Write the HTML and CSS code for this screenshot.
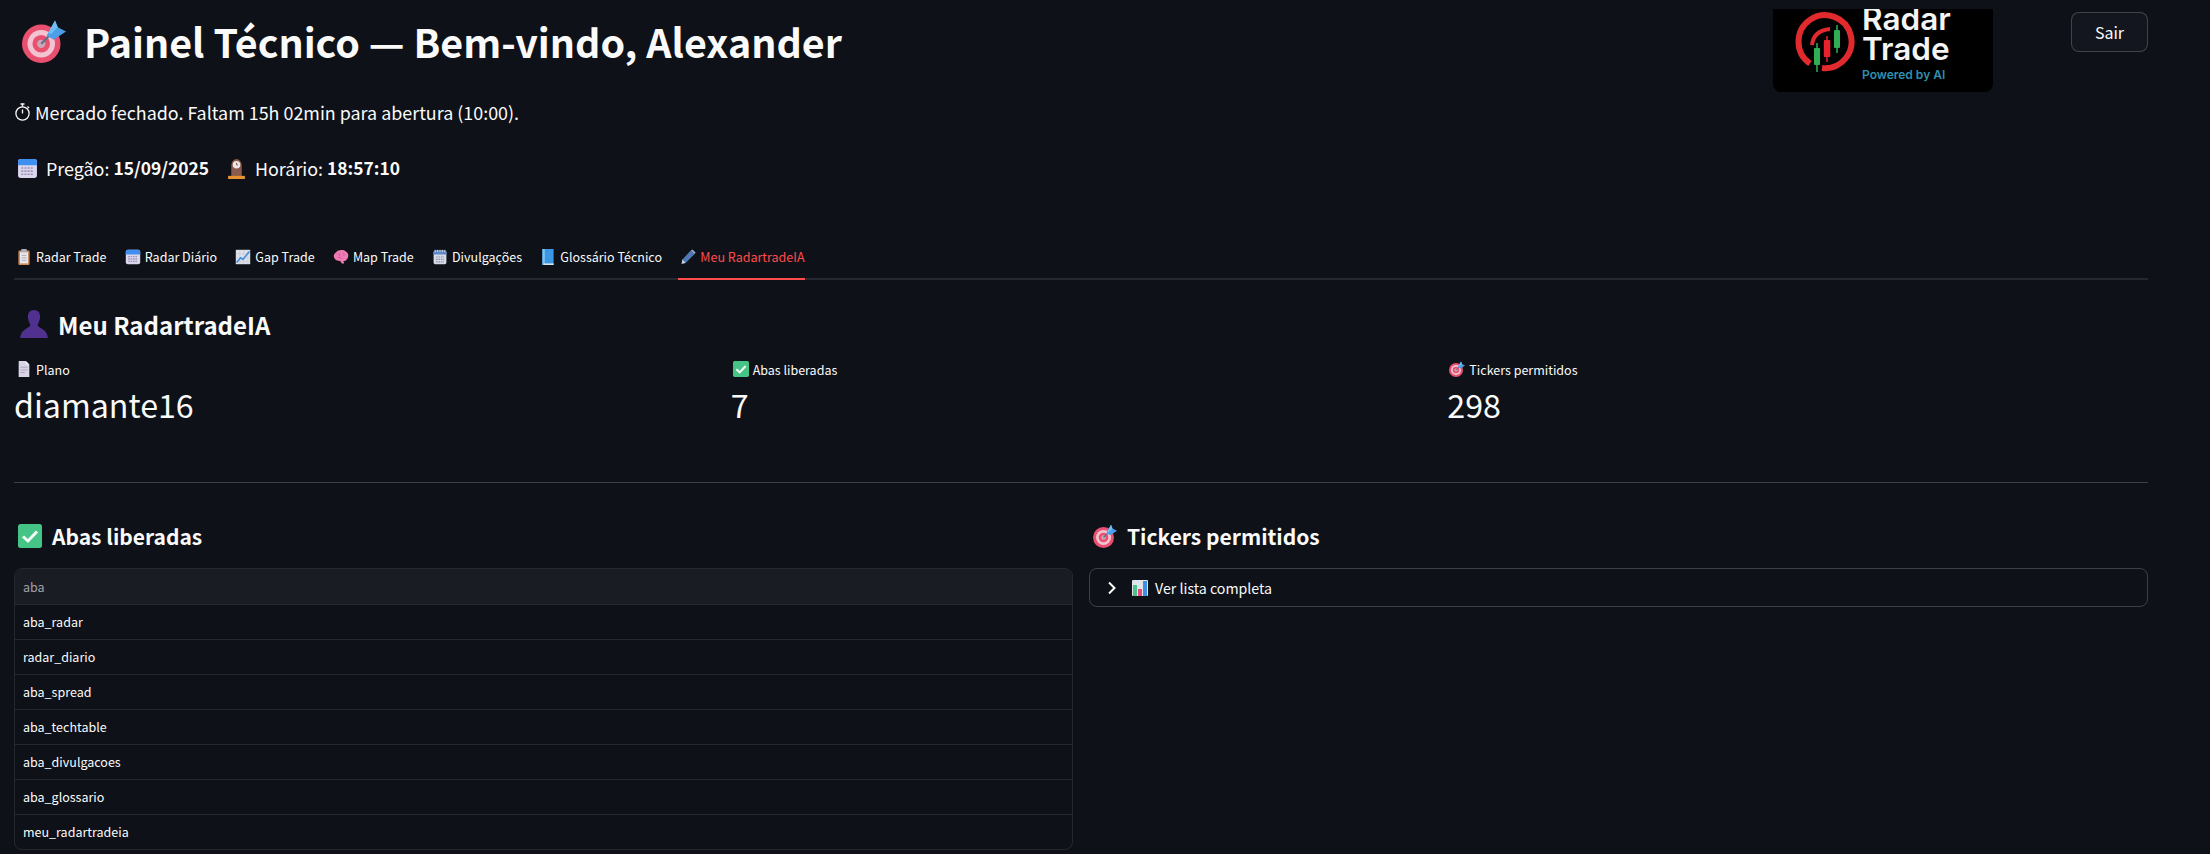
FILE: index.html

```html
<!DOCTYPE html>
<html lang="pt-BR">
<head>
    <meta charset="UTF-8">
    <meta name="viewport" content="width=device-width, initial-scale=1.0">
    <link rel="stylesheet" href="styles.css">
    <title>Painel Técnico</title>
</head>
<body>
    <!-- Emoji drawings used all over the page -->
    <svg class="defs" aria-hidden="true">
        <symbol id="i-target" viewBox="0 0 32 32">
            <circle cx="14" cy="18" r="14" fill="#e9506f"/>
            <circle cx="14" cy="18" r="10" fill="#f3c3d2"/>
            <circle cx="14" cy="18" r="6.4" fill="#e9506f"/>
            <circle cx="14" cy="18" r="3" fill="#c9a9b8"/>
            <path d="M14 18 L22 10" stroke="#5f6f85" stroke-width="1.6"/>
            <path d="M18 12 L24 1 L26 6 L32 9 L23 15 Z" fill="#4a9fe8"/>
            <path d="M24 1 L26 6 L21 11 L19 10 Z" fill="#6cc0f5"/>
        </symbol>
        <symbol id="i-timer" viewBox="0 0 16 20">
            <circle cx="8" cy="11.5" r="6.6" fill="none" stroke="#fafafa" stroke-width="1.3"/>
            <path d="M6 2 H10 M8 2 V5 M8 11.5 V7.5 M13 4.5 L14.5 6" stroke="#fafafa" stroke-width="1.3" fill="none"/>
        </symbol>
        <symbol id="i-calendar" viewBox="0 0 20 20">
            <rect x="1" y="1" width="18" height="18" rx="2.5" fill="#dcd6ec"/>
            <path d="M1 7 V3.5 A2.5 2.5 0 0 1 3.5 1 H16.500 A2.500 2.500 0 0 1 19 3.500 V7 Z" fill="#3f8ff0"/>
            <path d="M4 9.500 H16 M4 12.500 H16 M4 15.500 H16" stroke="#9d95bd" stroke-width="1.600" stroke-dasharray="2 1"/>
        </symbol>
        <symbol id="i-spiral" viewBox="0 0 20 20">
            <rect x="2" y="2" width="16" height="17" rx="2" fill="#d6d9e6"/>
            <path d="M2 7 V4 A2 2 0 0 1 4 2 H16 A2 2 0 0 1 18 4 V7 Z" fill="#5b86c9"/>
            <path d="M4 1 V4 M7 1 V4 M10 1 V4 M13 1 V4 M16 1 V4" stroke="#e4e6ef" stroke-width="1"/>
            <path d="M5 10 H15 M5 13 H15 M5 16 H15" stroke="#8f93ad" stroke-width="1.500" stroke-dasharray="2 1"/>
        </symbol>
        <symbol id="i-clock" viewBox="0 0 20 20">
            <path d="M5 18 V7 A5 6 0 0 1 15 7 V18 Z" fill="#8a5a4c"/>
            <circle cx="10" cy="6.500" r="3.600" fill="#ece6e6"/>
            <path d="M10 4.500 V6.500 H11.500" stroke="#6b4a40" stroke-width=".8" fill="none"/>
            <rect x="2" y="17" width="16" height="3" fill="#e8922f"/>
        </symbol>
        <symbol id="i-clipboard" viewBox="0 0 16 20">
            <rect x="1" y="2" width="14" height="18" rx="1.500" fill="#d08a58"/>
            <rect x="3" y="4" width="10" height="14" fill="#e9e6ec"/>
            <rect x="4.500" y="0" width="7" height="4" rx="1" fill="#aab0c0"/>
            <path d="M5 8 H11 M5 11 H11 M5 14 H11" stroke="#9a9fb0" stroke-width="1"/>
        </symbol>
        <symbol id="i-chart" viewBox="0 0 20 20">
            <rect x="1" y="1" width="18" height="18" fill="#dfe1ea"/>
            <path d="M1 6 H19 M1 11 H19 M1 16 H19 M6 1 V19 M11 1 V19 M16 1 V19" stroke="#c2c6d6" stroke-width=".7"/>
            <path d="M2 17 L7 11 L10 13 L18 3" stroke="#3f8fe0" stroke-width="2" fill="none"/>
        </symbol>
        <symbol id="i-brain" viewBox="0 0 20 20">
            <path d="M4 4 C6 1 13 0 16 3 C20 5 20 11 17 13 C16 15 14 15 13 15 L14 18 L11 18 L9 15 C5 15 3 14 2 12 C0 9 1 6 4 4 Z" fill="#ee7bb4"/>
            <path d="M6 6 C8 5 9 7 8 9 M12 5 C14 5 15 7 13 9 M6 11 C8 10 10 11 11 12" stroke="#c94f90" stroke-width=".9" fill="none"/>
        </symbol>
        <symbol id="i-book" viewBox="0 0 16 20">
            <rect x="1" y="0" width="14" height="20" fill="#3b97e3"/>
            <rect x="1" y="0" width="3" height="20" fill="#7fc3f3"/>
            <rect x="3" y="18" width="12" height="2" fill="#d5e4f1"/>
        </symbol>
        <symbol id="i-pen" viewBox="0 0 20 20">
            <path d="M13.500 2 L18 6.500 L7 17.500 L2 18.500 L3 13 Z" fill="#4f79b4"/>
            <path d="M13.500 2 L15.500 0.500 L19.500 4.500 L18 6.500 Z" fill="#8fa9cc"/>
            <path d="M3 13 L7 17.500 L2 18.500 Z" fill="#c8d2e0"/>
        </symbol>
        <symbol id="i-user" viewBox="0 0 28 28">
            <path d="M14 0 C19 0 20.500 4 20 8 C19.700 11 18 14 17.500 15.500 C18 17.500 27 19 28 28 H0 C1 19 10 17.500 10.500 15.500 C10 14 8.300 11 8 8 C7.500 4 9 0 14 0 Z" fill="#51318f"/>
        </symbol>
        <symbol id="i-doc" viewBox="0 0 14 18">
            <path d="M1 0 H9 L13 4 V18 H1 Z" fill="#d9d5e6"/>
            <path d="M9 0 L13 4 H9 Z" fill="#f2f0f8"/>
            <path d="M3 7 H11 M3 10 H11 M3 13 H8" stroke="#a7a3ba" stroke-width="1"/>
        </symbol>
        <symbol id="i-check" viewBox="0 0 24 24">
            <rect width="24" height="24" rx="2.500" fill="#46c486"/>
            <path d="M5 12.500 L10 17 L19 7.500" stroke="#f4fbf7" stroke-width="3" fill="none"/>
        </symbol>
        <symbol id="i-bars" viewBox="0 0 16 16">
            <rect width="16" height="16" rx="1" fill="#dfe3ea"/>
            <rect x="1" y="5" width="4" height="11" fill="#49c38b"/>
            <rect x="6" y="9" width="4" height="7" fill="#e9457f"/>
            <rect x="11" y="1" width="4" height="15" fill="#3f8fe0"/>
        </symbol>
    </svg>

    <div class="page">
        <header class="top">
            <h1 class="title"><svg class="ico-title"><use href="#i-target"/></svg>Painel Técnico — Bem-vindo, Alexander</h1>
            <div class="logo">
                <svg class="logo-mark" viewBox="0 0 64 64">
                    <path d="M15 53.500 A26.500 26.500 0 1 1 27 58" fill="none" stroke="#e02a2e" stroke-width="6"/>
                    <path d="M17 35 C18 26 24 20 35 19" fill="none" stroke="#e02a2e" stroke-width="4"/>
                    <path d="M22 33 V62" stroke="#2fae55" stroke-width="1.500"/>
                    <rect x="19" y="38" width="6" height="17" rx="1" fill="#2fae55"/>
                    <path d="M32 26 V52" stroke="#e8222c" stroke-width="1.500"/>
                    <rect x="28.800" y="30" width="6.500" height="17" rx="1" fill="#e8222c"/>
                    <path d="M42 15 V43" stroke="#2fae55" stroke-width="1.500"/>
                    <rect x="39" y="20" width="6" height="18" rx="1" fill="#2fae55"/>
                </svg>
                <div class="logo-text">
                    <span class="logo-name">Radar</span>
                    <span class="logo-name">Trade</span>
                    <span class="logo-tag">Powered by AI</span>
                </div>
            </div>
            <button class="logout">Sair</button>
        </header>

        <p class="market"><svg class="ico-timer"><use href="#i-timer"/></svg>Mercado fechado. Faltam 15h 02min para abertura (10:00).</p>

        <p class="session">
            <svg class="ico-session"><use href="#i-calendar"/></svg>Pregão: <b>15/09/2025</b>
            <svg class="ico-session second"><use href="#i-clock"/></svg>Horário: <b>18:57:10</b>
        </p>

        <nav class="tabs">
            <a class="tab"><svg class="ico-tab"><use href="#i-clipboard"/></svg>Radar Trade</a>
            <a class="tab"><svg class="ico-tab"><use href="#i-calendar"/></svg>Radar Diário</a>
            <a class="tab"><svg class="ico-tab"><use href="#i-chart"/></svg>Gap Trade</a>
            <a class="tab"><svg class="ico-tab"><use href="#i-brain"/></svg>Map Trade</a>
            <a class="tab"><svg class="ico-tab"><use href="#i-spiral"/></svg>Divulgações</a>
            <a class="tab"><svg class="ico-tab"><use href="#i-book"/></svg>Glossário Técnico</a>
            <a class="tab active"><svg class="ico-tab"><use href="#i-pen"/></svg>Meu RadartradeIA</a>
        </nav>

        <h2 class="section-title"><svg class="ico-user"><use href="#i-user"/></svg>Meu RadartradeIA</h2>

        <div class="metrics">
            <div class="metric">
                <div class="metric-label"><svg class="ico-tab"><use href="#i-doc"/></svg>Plano</div>
                <div class="metric-value">diamante16</div>
            </div>
            <div class="metric">
                <div class="metric-label"><svg class="ico-tab"><use href="#i-check"/></svg>Abas liberadas</div>
                <div class="metric-value">7</div>
            </div>
            <div class="metric">
                <div class="metric-label"><svg class="ico-tab"><use href="#i-target"/></svg>Tickers permitidos</div>
                <div class="metric-value">298</div>
            </div>
        </div>

        <hr class="divider">

        <div class="columns">
            <section>
                <h3 class="col-title"><svg class="ico-h3"><use href="#i-check"/></svg>Abas liberadas</h3>
                <div class="table-wrap">
                    <table class="tabs-table">
                        <thead>
                            <tr><th>aba</th></tr>
                        </thead>
                        <tbody>
                            <tr><td>aba_radar</td></tr>
                            <tr><td>radar_diario</td></tr>
                            <tr><td>aba_spread</td></tr>
                            <tr><td>aba_techtable</td></tr>
                            <tr><td>aba_divulgacoes</td></tr>
                            <tr><td>aba_glossario</td></tr>
                            <tr><td>meu_radartradeia</td></tr>
                        </tbody>
                    </table>
                </div>
            </section>
            <section>
                <h3 class="col-title"><svg class="ico-h3"><use href="#i-target"/></svg>Tickers permitidos</h3>
                <div class="expander">
                    <svg class="chevron" viewBox="0 0 10 14"><path d="M2 1.500 L7.500 7 L2 12.500" fill="none" stroke="#fafafa" stroke-width="2"/></svg>
                    <svg class="ico-bars"><use href="#i-bars"/></svg>Ver lista completa
                </div>
            </section>
        </div>
    </div>
</body>
</html>
```

FILE: styles.css

```css
html, body {
    margin: 0;
    height: 100%;
    overflow: hidden;
}

body {
    background-color: #0e1117;
    color: #fafafa;
    font-family: "Noto Sans CJK SC", "Noto Sans", sans-serif;
}

.defs {
    display: none;
}

.page {
    padding: 0 62px 0 14px;
}

/* Header row */
.top {
    display: flex;
    align-items: flex-start;
    height: 92px;
}

.title {
    margin: 0;
    display: flex;
    align-items: center;
    height: 82px;
    font-size: 39.4px;
    font-weight: 700;
    line-height: 82px;
}

.ico-title {
    width: 44px;
    height: 44px;
    margin: 0 18px 0 8px;
}

.logo {
    display: flex;
    align-items: flex-start;
    width: 220px;
    height: 83px;
    margin: 9px 0 0 auto;
    background-color: #000;
    border-radius: 0 0 8px 8px;
    overflow: hidden;
}

.logo-mark {
    width: 64px;
    height: 64px;
    margin: 1px 0 0 22px;
    flex-shrink: 0;
}

.logo-text {
    display: flex;
    flex-direction: column;
    margin: -5px 0 0 3px;
    font-family: Inter, sans-serif;
}

.logo-name {
    font-size: 31.5px;
    font-weight: 600;
    line-height: 30px;
    color: #f4f4f4;
}

.logo-tag {
    margin-top: 3px;
    font-size: 12px;
    font-weight: 600;
    line-height: 16px;
    color: #2f8fae;
}

.logout {
    width: 77px;
    height: 40px;
    margin: 12px 0 0 78px;
    background-color: #13161e;
    border: 1px solid rgba(250, 250, 250, 0.2);
    border-radius: 8px;
    color: #fafafa;
    font-family: inherit;
    font-size: 16px;
}

/* Market status lines */
.market, .session {
    display: flex;
    align-items: center;
    height: 30px;
    margin: 5px 0 0;
    font-size: 17.9px;
    line-height: 30px;
    white-space: pre-wrap;
}

.session {
    margin-top: 26px;
    padding-left: 3px;
    white-space: normal;
}

.session b {
    margin-left: 4px;
    font-size: 17.4px;
    font-weight: 700;
}

.ico-timer {
    width: 17px;
    height: 20px;
    margin: 0 4px 0 0;
}

.ico-session {
    width: 21px;
    height: 21px;
    margin-right: 8px;
}

.ico-session.second {
    margin-left: 17px;
}

/* Tabs */
.tabs {
    display: flex;
    gap: 16.3px;
    height: 45px;
    margin-top: 52px;
    border-bottom: 2px solid #262730;
    box-sizing: border-box;
}

.tab {
    display: flex;
    align-items: center;
    height: 45px;
    box-sizing: border-box;
    padding-bottom: 1px;
    font-size: 12.5px;
    line-height: 20px;
}

.tab.active {
    color: #ff4b4b;
    border-bottom: 2px solid #ff4b4b;
    padding: 1px 0 0;
}

.ico-tab {
    width: 16px;
    height: 16px;
    margin: 0 4px 0 2px;
}

/* Profile section */
.section-title {
    display: flex;
    align-items: center;
    height: 40px;
    margin: 24px 0 0;
    font-size: 24px;
    font-weight: 700;
}

.ico-user {
    width: 28px;
    height: 28px;
    margin: 0 10px 0 6px;
}

.metrics {
    display: grid;
    grid-template-columns: repeat(3, 1fr);
    gap: 16px;
    margin-top: 15px;
}

.metric-label {
    display: flex;
    align-items: center;
    height: 20px;
    font-size: 12.5px;
}

.metric-value {
    height: 52px;
    font-size: 32.2px;
    line-height: 50px;
}

.divider {
    height: 1px;
    margin: 51px 0 0;
    background-color: rgba(250, 250, 250, 0.2);
    border: 0;
}

/* Two bottom columns */
.columns {
    display: grid;
    grid-template-columns: 1fr 1fr;
    gap: 16px;
    margin-top: 36px;
}

.col-title {
    display: flex;
    align-items: center;
    height: 34px;
    margin: 0 0 15px;
    font-size: 21px;
    font-weight: 700;
}

.ico-h3 {
    width: 24px;
    height: 24px;
    margin: 0 10px 0 4px;
}

.table-wrap {
    border: 1px solid #262730;
    border-radius: 8px;
    overflow: hidden;
}

.tabs-table {
    width: 100%;
    border-collapse: collapse;
    font-size: 12.5px;
}

.tabs-table th, .tabs-table td {
    padding: 0 8px;
    text-align: left;
    font-weight: 400;
    line-height: 20px;
}

.tabs-table th {
    height: 35px;
    background-color: #1a1c24;
    color: rgba(250, 250, 250, 0.6);
}

.tabs-table td {
    height: 34px;
    border-top: 1px solid #262730;
}

.expander {
    display: flex;
    align-items: center;
    height: 39px;
    box-sizing: border-box;
    padding-left: 17px;
    border: 1px solid rgba(250, 250, 250, 0.2);
    border-radius: 8px;
    font-size: 14.2px;
}

.chevron {
    width: 10px;
    height: 14px;
    margin-right: 15px;
}

.ico-bars {
    width: 16px;
    height: 16px;
    margin-right: 7px;
}
```
